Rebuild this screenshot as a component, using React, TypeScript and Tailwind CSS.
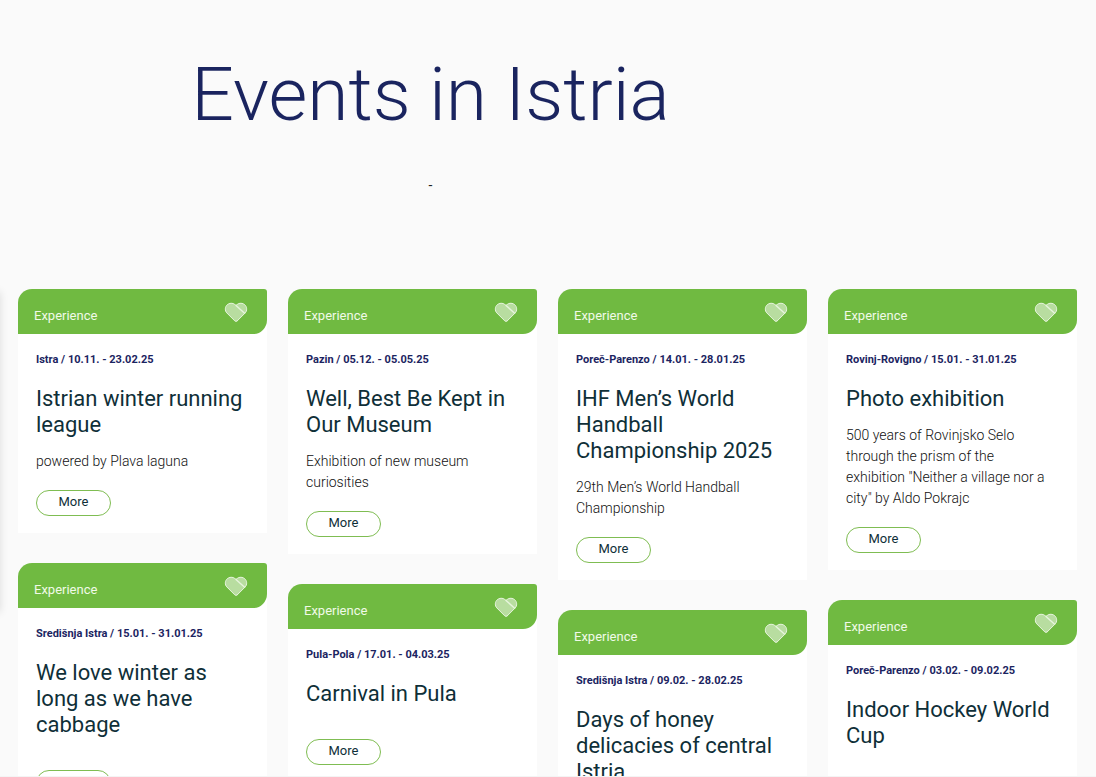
type EventItem = {
  place: string;
  title: string;
  text?: string;
};

const columns: EventItem[][] = [
  [
    { place: "Istra / 10.11. - 23.02.25", title: "Istrian winter running league", text: "powered by Plava laguna" },
    { place: "Središnja Istra / 15.01. - 31.01.25", title: "We love winter as long as we have cabbage" },
  ],
  [
    { place: "Pazin / 05.12. - 05.05.25", title: "Well, Best Be Kept in Our Museum", text: "Exhibition of new museum curiosities" },
    { place: "Pula-Pola / 17.01. - 04.03.25", title: "Carnival in Pula" },
  ],
  [
    { place: "Poreč-Parenzo / 14.01. - 28.01.25", title: "IHF Men’s World Handball Championship 2025", text: "29th Men’s World Handball Championship" },
    { place: "Središnja Istra / 09.02. - 28.02.25", title: "Days of honey delicacies of central Istria" },
  ],
  [
    { place: "Rovinj-Rovigno / 15.01. - 31.01.25", title: "Photo exhibition", text: "500 years of Rovinjsko Selo through the prism of the exhibition \"Neither a village nor a city\" by Aldo Pokrajc" },
    { place: "Poreč-Parenzo / 03.02. - 09.02.25", title: "Indoor Hockey World Cup" },
  ],
];

function Heart() {
  return (
    <svg viewBox="0 0 24 22" className="h-[22px] w-6" fill="none" stroke="#e6f4dc" strokeLinecap="round" strokeLinejoin="round" aria-hidden="true">
      <path
        d="M13.200 19.900 21.200 11.900C23.300 9.700 23.100 5.900 20.900 3.900C18.700 1.800 15.300 1.700 13.100 3.500L12 4.400L10.900 3.500C8.700 1.700 5.300 1.800 3.100 3.900C.9 5.900 .7 9.700 2.800 11.900L10.800 19.900Q12 20.900 13.200 19.900Z"
        fill="#fff"
        fillOpacity="0.5"
      />
      <path d="M12 4.400 20.600 12.200" strokeWidth="1.400" />
    </svg>
  );
}

function EventCard({ place, title, text }: EventItem) {
  return (
    <article className="rounded-t-[16px] bg-white">
      <header className="flex h-[45px] items-center justify-between rounded-tl-[14px] rounded-tr-[3px] rounded-br-[14px] bg-[#70ba41] pr-[19px] pl-4">
        <span className="pt-2 text-[13px] leading-5 text-[#f0fae8]">Experience</span>
        <button type="button" aria-label="Add to favourites">
          <Heart />
        </button>
      </header>
      <div className="px-[18px] pt-[18px] pb-[17px]">
        <p className="text-[11px] leading-4 font-bold text-[#1b2461]">{place}</p>
        <h2 className="mt-[18px] text-[22px] leading-[26px] text-[#0f2f38]">{title}</h2>
        <p className="mt-[13px] min-h-px pr-1 text-sm leading-[21px] font-light text-[#111]">{text}</p>
        <a
          href="#more"
          className="mt-[18px] flex h-[26px] w-[75px] items-center justify-center rounded-full border border-[#7fbd52] pb-[2px] text-[13px] leading-5 text-[#0f2f38]"
        >
          More
        </a>
      </div>
    </article>
  );
}

export default function App() {
  return (
    <main className="relative min-h-screen overflow-x-clip bg-[#fafafa] font-['Roboto',sans-serif]">
      <div className="pr-[235px] text-center">
        <h1 className="pt-[49px] text-[75px] leading-[90px] font-light text-[#1a245f]">Events in Istria</h1>
        <p className="mt-9 text-sm leading-5 text-[#222]">-</p>
      </div>
      <div className="absolute top-[292px] -left-2 h-[320px] w-2 shadow-[0_0_8px_rgba(0,0,0,0.13)]" />
      <section className="mt-[94px] grid grid-cols-4 gap-[21px] pr-[19px] pl-[18px]">
        {columns.map((events, i) => (
          <div key={i} className="flex flex-col gap-[30px]">
            {events.map((event) => (
              <EventCard key={event.title + event.place} {...event} />
            ))}
          </div>
        ))}
      </section>
      <div className="fixed inset-x-0 bottom-0 h-px bg-[#f4f4f4]" />
    </main>
  );
}
